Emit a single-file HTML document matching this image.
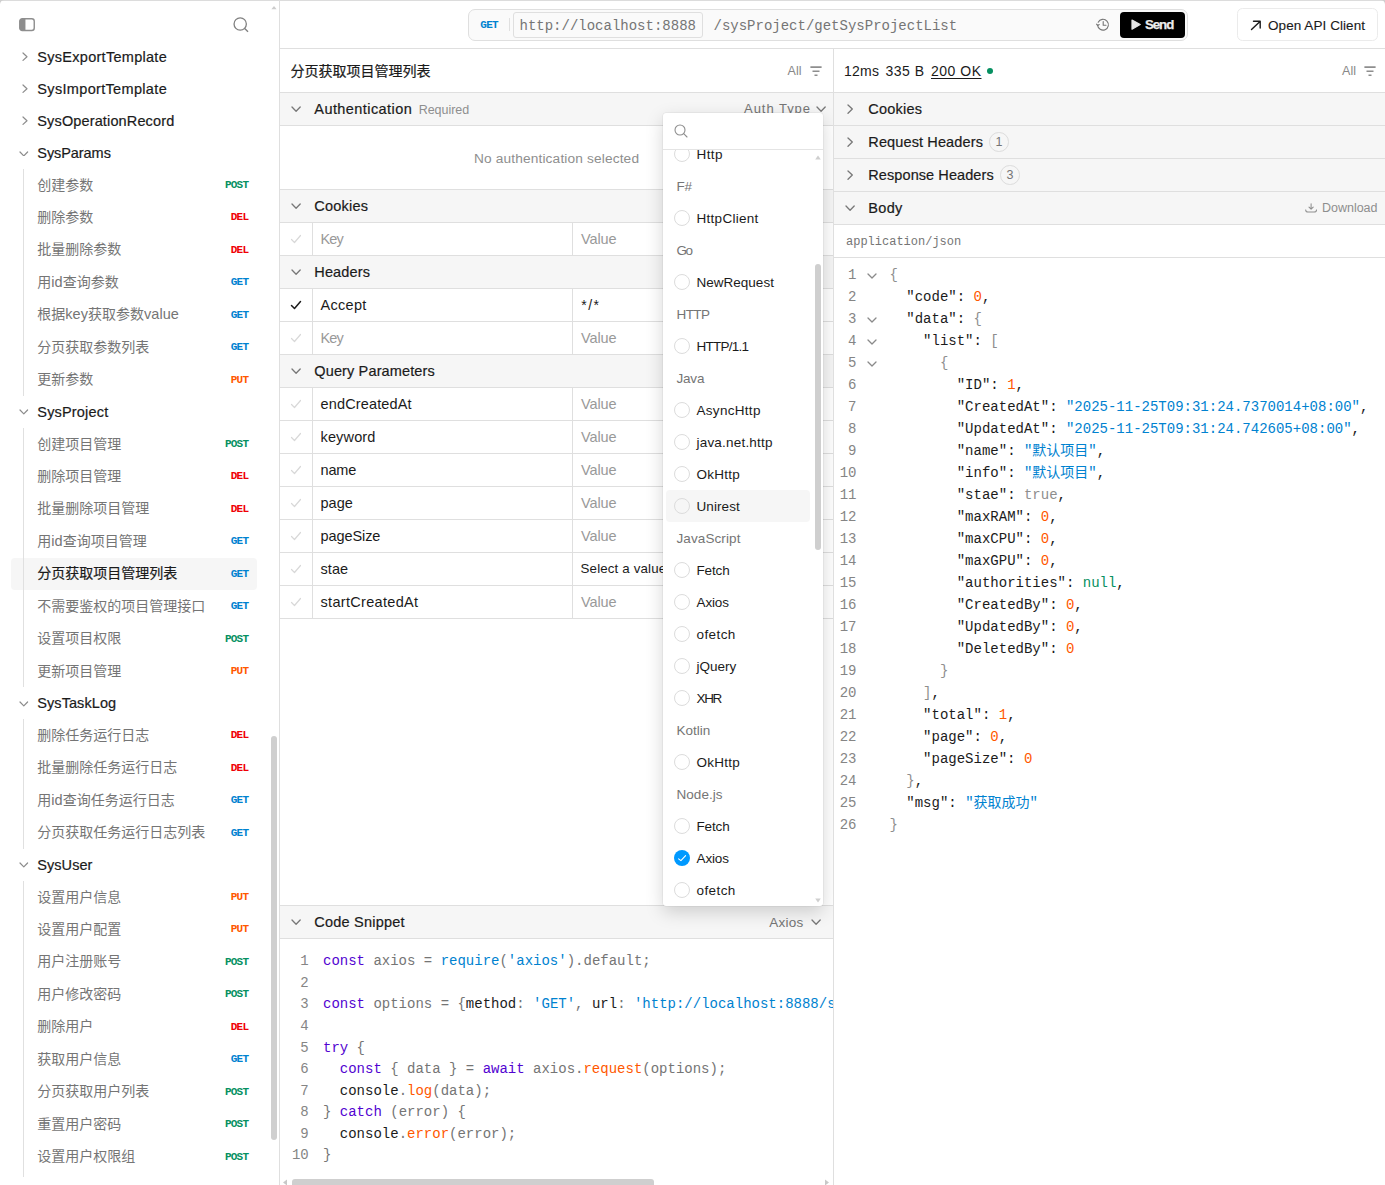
<!DOCTYPE html>
<html lang="zh-CN"><head><meta charset="utf-8"><title>API Reference</title>
<style>
html,body{margin:0;padding:0;background:#fff;}
body{width:1385px;height:1185px;position:relative;overflow:hidden;-webkit-font-smoothing:antialiased;}
.b{position:absolute;box-sizing:border-box;}
.t{position:absolute;white-space:pre;line-height:20px;}
.s{font-family:"Liberation Sans","Noto Sans CJK SC",sans-serif;}
.m{font-family:"Liberation Mono","Noto Sans CJK SC",monospace;}
</style></head><body>
<div class="b" style="left:0px;top:0px;width:1385px;height:1px;background:#dcdcdc"></div>
<svg class="b" style="left:0px;top:0px;" width="5" height="5" viewBox="0 0 5 5"><path d="M0 0 H4.5 A4.5 4.5 0 0 0 0 4.5Z" fill="#cfcfcf"/></svg>
<svg class="b" style="left:1380px;top:0px;" width="5" height="5" viewBox="0 0 5 5"><path d="M5 0 H0.5 A4.5 4.5 0 0 1 5 4.5Z" fill="#cfcfcf"/></svg>
<div class="b" style="left:279px;top:0px;width:1px;height:1185px;background:#dfdfdf"></div>
<div class="b" style="left:280px;top:48px;width:1105px;height:1px;background:#dfdfdf"></div>
<div class="b" style="left:833px;top:49px;width:1px;height:1136px;background:#dfdfdf"></div>
<svg class="b" style="left:19px;top:18.2px;" width="17" height="14" viewBox="0 0 17 14"><rect x="0.75" y="0.75" width="14.5" height="11.7" rx="2.5" fill="none" stroke="#8e8e8e" stroke-width="1.4"/><path d="M0.75 3.25 a2.5 2.5 0 0 1 2.5 -2.5 h3.2 v11.7 h-3.2 a2.5 2.5 0 0 1 -2.5 -2.5z" fill="#8e8e8e"/></svg>
<svg class="b" style="left:232px;top:16px;" width="18" height="18" viewBox="0 0 18 18"><circle cx="8.2" cy="8" r="6.15" fill="none" stroke="#808080" stroke-width="1.3"/><path d="M12.7 12.6 L16 15.8" stroke="#808080" stroke-width="1.4"/></svg>
<svg class="b" style="left:21.6px;top:52.2px;" width="6" height="9.4" viewBox="0 0 6 9.4"><path d="M1 1 L5 4.7 L1 8.4" fill="none" stroke="#8c8c8c" stroke-width="1.2" stroke-linecap="round" stroke-linejoin="round"/></svg>
<span class="t s" style="top:46.7px;font-size:14.5px;color:#1b1b1b;-webkit-text-stroke:0.2px #1b1b1b;left:37.3px;letter-spacing:0.280px;">SysExportTemplate</span>
<svg class="b" style="left:21.6px;top:84.2px;" width="6" height="9.4" viewBox="0 0 6 9.4"><path d="M1 1 L5 4.7 L1 8.4" fill="none" stroke="#8c8c8c" stroke-width="1.2" stroke-linecap="round" stroke-linejoin="round"/></svg>
<span class="t s" style="top:78.7px;font-size:14.5px;color:#1b1b1b;-webkit-text-stroke:0.2px #1b1b1b;left:37.3px;letter-spacing:0.331px;">SysImportTemplate</span>
<svg class="b" style="left:21.6px;top:116.2px;" width="6" height="9.4" viewBox="0 0 6 9.4"><path d="M1 1 L5 4.7 L1 8.4" fill="none" stroke="#8c8c8c" stroke-width="1.2" stroke-linecap="round" stroke-linejoin="round"/></svg>
<span class="t s" style="top:110.7px;font-size:14.5px;color:#1b1b1b;-webkit-text-stroke:0.2px #1b1b1b;left:37.3px;letter-spacing:0.136px;">SysOperationRecord</span>
<svg class="b" style="left:19.2px;top:150.55px;" width="9.6" height="5.9" viewBox="0 0 9.6 5.9"><path d="M1 1 L4.8 4.9 L8.6 1" fill="none" stroke="#8c8c8c" stroke-width="1.2" stroke-linecap="round" stroke-linejoin="round"/></svg>
<span class="t s" style="top:142.8px;font-size:14.5px;color:#1b1b1b;-webkit-text-stroke:0.2px #1b1b1b;left:37.3px;letter-spacing:-0.068px;">SysParams</span>
<span class="t s" style="top:174.5px;font-size:14px;color:#757575;left:37.3px;">创建参数</span>
<span class="t m" style="top:175.1px;font-size:11px;color:#069061;font-weight:bold;right:1136.7px;letter-spacing:-0.75px;">POST</span>
<span class="t s" style="top:206.5px;font-size:14px;color:#757575;left:37.3px;">删除参数</span>
<span class="t m" style="top:207.1px;font-size:11px;color:#ef0006;font-weight:bold;right:1136.7px;letter-spacing:-0.75px;">DEL</span>
<span class="t s" style="top:239px;font-size:14px;color:#757575;left:37.3px;">批量删除参数</span>
<span class="t m" style="top:239.6px;font-size:11px;color:#ef0006;font-weight:bold;right:1136.7px;letter-spacing:-0.75px;">DEL</span>
<span class="t s" style="top:271.5px;font-size:14px;color:#757575;left:37.3px;">用<span style="font-size:14.5px;letter-spacing:0.05px">id</span>查询参数</span>
<span class="t m" style="top:272.1px;font-size:11px;color:#0082d0;font-weight:bold;right:1136.7px;letter-spacing:-0.75px;">GET</span>
<span class="t s" style="top:304px;font-size:14px;color:#757575;left:37.3px;">根据<span style="font-size:14.5px;letter-spacing:0.05px">key</span>获取参数<span style="font-size:14.5px;letter-spacing:0.05px">value</span></span>
<span class="t m" style="top:304.6px;font-size:11px;color:#0082d0;font-weight:bold;right:1136.7px;letter-spacing:-0.75px;">GET</span>
<span class="t s" style="top:336.5px;font-size:14px;color:#757575;left:37.3px;">分页获取参数列表</span>
<span class="t m" style="top:337.1px;font-size:11px;color:#0082d0;font-weight:bold;right:1136.7px;letter-spacing:-0.75px;">GET</span>
<span class="t s" style="top:369px;font-size:14px;color:#757575;left:37.3px;">更新参数</span>
<span class="t m" style="top:369.6px;font-size:11px;color:#ff5800;font-weight:bold;right:1136.7px;letter-spacing:-0.75px;">PUT</span>
<svg class="b" style="left:19.2px;top:409.25px;" width="9.6" height="5.9" viewBox="0 0 9.6 5.9"><path d="M1 1 L4.8 4.9 L8.6 1" fill="none" stroke="#8c8c8c" stroke-width="1.2" stroke-linecap="round" stroke-linejoin="round"/></svg>
<span class="t s" style="top:401.5px;font-size:14.5px;color:#1b1b1b;-webkit-text-stroke:0.2px #1b1b1b;left:37.3px;letter-spacing:0.176px;">SysProject</span>
<span class="t s" style="top:433.5px;font-size:14px;color:#757575;left:37.3px;">创建项目管理</span>
<span class="t m" style="top:434.1px;font-size:11px;color:#069061;font-weight:bold;right:1136.7px;letter-spacing:-0.75px;">POST</span>
<span class="t s" style="top:465.5px;font-size:14px;color:#757575;left:37.3px;">删除项目管理</span>
<span class="t m" style="top:466.1px;font-size:11px;color:#ef0006;font-weight:bold;right:1136.7px;letter-spacing:-0.75px;">DEL</span>
<span class="t s" style="top:498px;font-size:14px;color:#757575;left:37.3px;">批量删除项目管理</span>
<span class="t m" style="top:498.6px;font-size:11px;color:#ef0006;font-weight:bold;right:1136.7px;letter-spacing:-0.75px;">DEL</span>
<span class="t s" style="top:530.5px;font-size:14px;color:#757575;left:37.3px;">用<span style="font-size:14.5px;letter-spacing:0.05px">id</span>查询项目管理</span>
<span class="t m" style="top:531.1px;font-size:11px;color:#0082d0;font-weight:bold;right:1136.7px;letter-spacing:-0.75px;">GET</span>
<div class="b" style="left:11px;top:558px;width:246px;height:31.5px;background:#f6f6f6;border-radius:4px"></div>
<span class="t s" style="top:563px;font-size:14px;color:#1b1b1b;-webkit-text-stroke:0.2px #1b1b1b;left:37.3px;">分页获取项目管理列表</span>
<span class="t m" style="top:563.6px;font-size:11px;color:#0082d0;font-weight:bold;right:1136.7px;letter-spacing:-0.75px;">GET</span>
<span class="t s" style="top:595.5px;font-size:14px;color:#757575;left:37.3px;">不需要鉴权的项目管理接口</span>
<span class="t m" style="top:596.1px;font-size:11px;color:#0082d0;font-weight:bold;right:1136.7px;letter-spacing:-0.75px;">GET</span>
<span class="t s" style="top:628px;font-size:14px;color:#757575;left:37.3px;">设置项目权限</span>
<span class="t m" style="top:628.6px;font-size:11px;color:#069061;font-weight:bold;right:1136.7px;letter-spacing:-0.75px;">POST</span>
<span class="t s" style="top:660.5px;font-size:14px;color:#757575;left:37.3px;">更新项目管理</span>
<span class="t m" style="top:661.1px;font-size:11px;color:#ff5800;font-weight:bold;right:1136.7px;letter-spacing:-0.75px;">PUT</span>
<svg class="b" style="left:19.2px;top:700.75px;" width="9.6" height="5.9" viewBox="0 0 9.6 5.9"><path d="M1 1 L4.8 4.9 L8.6 1" fill="none" stroke="#8c8c8c" stroke-width="1.2" stroke-linecap="round" stroke-linejoin="round"/></svg>
<span class="t s" style="top:693px;font-size:14.5px;color:#1b1b1b;-webkit-text-stroke:0.2px #1b1b1b;left:37.3px;letter-spacing:0.068px;">SysTaskLog</span>
<span class="t s" style="top:724.5px;font-size:14px;color:#757575;left:37.3px;">删除任务运行日志</span>
<span class="t m" style="top:725.1px;font-size:11px;color:#ef0006;font-weight:bold;right:1136.7px;letter-spacing:-0.75px;">DEL</span>
<span class="t s" style="top:757px;font-size:14px;color:#757575;left:37.3px;">批量删除任务运行日志</span>
<span class="t m" style="top:757.6px;font-size:11px;color:#ef0006;font-weight:bold;right:1136.7px;letter-spacing:-0.75px;">DEL</span>
<span class="t s" style="top:789.5px;font-size:14px;color:#757575;left:37.3px;">用<span style="font-size:14.5px;letter-spacing:0.05px">id</span>查询任务运行日志</span>
<span class="t m" style="top:790.1px;font-size:11px;color:#0082d0;font-weight:bold;right:1136.7px;letter-spacing:-0.75px;">GET</span>
<span class="t s" style="top:822px;font-size:14px;color:#757575;left:37.3px;">分页获取任务运行日志列表</span>
<span class="t m" style="top:822.6px;font-size:11px;color:#0082d0;font-weight:bold;right:1136.7px;letter-spacing:-0.75px;">GET</span>
<svg class="b" style="left:19.2px;top:862.25px;" width="9.6" height="5.9" viewBox="0 0 9.6 5.9"><path d="M1 1 L4.8 4.9 L8.6 1" fill="none" stroke="#8c8c8c" stroke-width="1.2" stroke-linecap="round" stroke-linejoin="round"/></svg>
<span class="t s" style="top:854.5px;font-size:14.5px;color:#1b1b1b;-webkit-text-stroke:0.2px #1b1b1b;left:37.3px;letter-spacing:0.051px;">SysUser</span>
<span class="t s" style="top:886.5px;font-size:14px;color:#757575;left:37.3px;">设置用户信息</span>
<span class="t m" style="top:887.1px;font-size:11px;color:#ff5800;font-weight:bold;right:1136.7px;letter-spacing:-0.75px;">PUT</span>
<span class="t s" style="top:918.5px;font-size:14px;color:#757575;left:37.3px;">设置用户配置</span>
<span class="t m" style="top:919.1px;font-size:11px;color:#ff5800;font-weight:bold;right:1136.7px;letter-spacing:-0.75px;">PUT</span>
<span class="t s" style="top:951px;font-size:14px;color:#757575;left:37.3px;">用户注册账号</span>
<span class="t m" style="top:951.6px;font-size:11px;color:#069061;font-weight:bold;right:1136.7px;letter-spacing:-0.75px;">POST</span>
<span class="t s" style="top:983.5px;font-size:14px;color:#757575;left:37.3px;">用户修改密码</span>
<span class="t m" style="top:984.1px;font-size:11px;color:#069061;font-weight:bold;right:1136.7px;letter-spacing:-0.75px;">POST</span>
<span class="t s" style="top:1016px;font-size:14px;color:#757575;left:37.3px;">删除用户</span>
<span class="t m" style="top:1016.6px;font-size:11px;color:#ef0006;font-weight:bold;right:1136.7px;letter-spacing:-0.75px;">DEL</span>
<span class="t s" style="top:1048.5px;font-size:14px;color:#757575;left:37.3px;">获取用户信息</span>
<span class="t m" style="top:1049.1px;font-size:11px;color:#0082d0;font-weight:bold;right:1136.7px;letter-spacing:-0.75px;">GET</span>
<span class="t s" style="top:1081px;font-size:14px;color:#757575;left:37.3px;">分页获取用户列表</span>
<span class="t m" style="top:1081.6px;font-size:11px;color:#069061;font-weight:bold;right:1136.7px;letter-spacing:-0.75px;">POST</span>
<span class="t s" style="top:1113.5px;font-size:14px;color:#757575;left:37.3px;">重置用户密码</span>
<span class="t m" style="top:1114.1px;font-size:11px;color:#069061;font-weight:bold;right:1136.7px;letter-spacing:-0.75px;">POST</span>
<span class="t s" style="top:1146px;font-size:14px;color:#757575;left:37.3px;">设置用户权限组</span>
<span class="t m" style="top:1146.6px;font-size:11px;color:#069061;font-weight:bold;right:1136.7px;letter-spacing:-0.75px;">POST</span>
<div class="b" style="left:23px;top:168.5px;width:1px;height:227.5px;background:#e0e0e0"></div>
<div class="b" style="left:23px;top:427.5px;width:1px;height:259.5px;background:#e0e0e0"></div>
<div class="b" style="left:23px;top:719px;width:1px;height:129.5px;background:#e0e0e0"></div>
<div class="b" style="left:23px;top:880.5px;width:1px;height:296.5px;background:#e0e0e0"></div>
<div class="b" style="left:271px;top:736px;width:6px;height:404px;background:#cfcfcf;border-radius:3px"></div>
<svg class="b" style="left:270px;top:5px;" width="8" height="6" viewBox="0 0 8 6"><path d="M4 0.9 L6.6 4.3 L1.4 4.3z" fill="#cdcdcd"/></svg>
<div class="b" style="left:468px;top:9px;width:720px;height:32px;border:1px solid #dfdfdf;border-radius:7px;background:#fafafa;"></div>
<span class="t m" style="top:14.6px;font-size:11px;color:#0082d0;font-weight:bold;left:480.3px;letter-spacing:-0.7px;">GET</span>
<div class="b" style="left:509px;top:18px;width:1px;height:12.5px;background:#e0e0e0"></div>
<div class="b" style="left:513px;top:12px;width:189.5px;height:26px;border:1px solid #dfdfdf;border-radius:3px;"></div>
<span class="t m" style="top:16.3px;font-size:14px;color:#757575;left:519.5px;">http://localhost:8888</span>
<span class="t m" style="top:16.3px;font-size:14px;color:#757575;left:713.5px;">/sysProject/getSysProjectList</span>
<svg class="b" style="left:1096px;top:18.3px;" width="14" height="14" viewBox="0 0 14 14"><path d="M2.2 4.2 A5.4 5.4 0 1 1 1.6 7" fill="none" stroke="#757575" stroke-width="1.1" stroke-linecap="round"/><path d="M0.6 6.2 L1.7 7.6 L3.2 6.5" fill="none" stroke="#757575" stroke-width="1.1" stroke-linecap="round" stroke-linejoin="round"/><path d="M7.2 3.6 V7.2 H10" fill="none" stroke="#757575" stroke-width="1.1" stroke-linecap="round" stroke-linejoin="round"/></svg>
<div class="b" style="left:1120px;top:12px;width:65px;height:26px;background:#000;border-radius:4px;"></div>
<svg class="b" style="left:1130.5px;top:19px;" width="11" height="12" viewBox="0 0 11 12"><path d="M1 1 L9.2 5.6 L1 10.2z" fill="#e6e6e6" stroke="#e6e6e6" stroke-width="1.2" stroke-linejoin="round"/></svg>
<span class="t s" style="top:15.2px;font-size:13.3px;color:#ececec;font-weight:bold;-webkit-text-stroke:0.25px #ececec;left:1145px;letter-spacing:-1.072px;">Send</span>
<div class="b" style="left:1237px;top:8px;width:141px;height:33px;border:1px solid #ebebeb;border-radius:5.5px;"></div>
<svg class="b" style="left:1250px;top:19.5px;" width="12" height="11" viewBox="0 0 12 11"><path d="M1.5 9.5 L10 1.5 M3.5 1.3 H10.2 V8" fill="none" stroke="#1b1b1b" stroke-width="1.4" stroke-linecap="round" stroke-linejoin="round"/></svg>
<span class="t s" style="top:16px;font-size:13.5px;color:#1b1b1b;-webkit-text-stroke:0.12px #1b1b1b;left:1268px;letter-spacing:0.067px;">Open API Client</span>
<span class="t s" style="top:60.5px;font-size:14px;color:#1b1b1b;-webkit-text-stroke:0.22px #1b1b1b;left:290.5px;">分页获取项目管理列表</span>
<span class="t s" style="top:60.8px;font-size:12.5px;color:#888;right:583.5px;">All</span>
<svg class="b" style="left:809.5px;top:65.8px;" width="13" height="11" viewBox="0 0 13 11"><path d="M0.4 1.1 H11.6 M2.5 5.2 H9.5 M4.5 9.3 H7.5" stroke="#8e8e8e" stroke-width="1.55"/></svg>
<span class="t s" style="top:60.8px;font-size:12.5px;color:#888;right:29px;">All</span>
<svg class="b" style="left:1364px;top:65.8px;" width="13" height="11" viewBox="0 0 13 11"><path d="M0.4 1.1 H11.6 M2.5 5.2 H9.5 M4.5 9.3 H7.5" stroke="#8e8e8e" stroke-width="1.55"/></svg>
<div class="b" style="left:280px;top:92px;width:553px;height:1px;background:#dfdfdf"></div>
<div class="b" style="left:280px;top:93px;width:553px;height:32px;background:#f6f6f6"></div>
<div class="b" style="left:280px;top:125px;width:553px;height:1px;background:#dfdfdf"></div>
<svg class="b" style="left:291.2px;top:106.35px;" width="10.2" height="6.3" viewBox="0 0 10.2 6.3"><path d="M1 1 L5.1 5.3 L9.2 1" fill="none" stroke="#787878" stroke-width="1.3" stroke-linecap="round" stroke-linejoin="round"/></svg>
<span class="t s" style="top:98.7px;font-size:14.5px;color:#1b1b1b;-webkit-text-stroke:0.2px #1b1b1b;left:314.3px;letter-spacing:0.430px;">Authentication</span>
<span class="t s" style="top:99.5px;font-size:12.5px;color:#8e8e8e;left:418.7px;letter-spacing:-0.033px;">Required</span>
<span class="t s" style="top:99px;font-size:13px;color:#757575;right:574px;letter-spacing:0.961px;">Auth Type</span>
<svg class="b" style="left:815.9px;top:106.35px;" width="10.2" height="6.3" viewBox="0 0 10.2 6.3"><path d="M1 1 L5.1 5.3 L9.2 1" fill="none" stroke="#787878" stroke-width="1.3" stroke-linecap="round" stroke-linejoin="round"/></svg>
<span class="t s" style="top:148.5px;font-size:13.7px;color:#8e8e8e;left:474px;letter-spacing:0.147px;">No authentication selected</span>
<div class="b" style="left:280px;top:189px;width:553px;height:1px;background:#dfdfdf"></div>
<div class="b" style="left:280px;top:190px;width:553px;height:32px;background:#f6f6f6"></div>
<div class="b" style="left:280px;top:222px;width:553px;height:1px;background:#dfdfdf"></div>
<svg class="b" style="left:291.2px;top:203.35px;" width="10.2" height="6.3" viewBox="0 0 10.2 6.3"><path d="M1 1 L5.1 5.3 L9.2 1" fill="none" stroke="#787878" stroke-width="1.3" stroke-linecap="round" stroke-linejoin="round"/></svg>
<span class="t s" style="top:195.7px;font-size:14.5px;color:#1b1b1b;-webkit-text-stroke:0.2px #1b1b1b;left:314.3px;letter-spacing:0.202px;">Cookies</span>
<div class="b" style="left:280px;top:255px;width:553px;height:1px;background:#dfdfdf"></div>
<div class="b" style="left:280px;top:256px;width:553px;height:32px;background:#f6f6f6"></div>
<div class="b" style="left:280px;top:288px;width:553px;height:1px;background:#dfdfdf"></div>
<svg class="b" style="left:291.2px;top:269.35px;" width="10.2" height="6.3" viewBox="0 0 10.2 6.3"><path d="M1 1 L5.1 5.3 L9.2 1" fill="none" stroke="#787878" stroke-width="1.3" stroke-linecap="round" stroke-linejoin="round"/></svg>
<span class="t s" style="top:261.7px;font-size:14.5px;color:#1b1b1b;-webkit-text-stroke:0.2px #1b1b1b;left:314.3px;letter-spacing:0.131px;">Headers</span>
<div class="b" style="left:280px;top:354px;width:553px;height:1px;background:#dfdfdf"></div>
<div class="b" style="left:280px;top:355px;width:553px;height:32px;background:#f6f6f6"></div>
<div class="b" style="left:280px;top:387px;width:553px;height:1px;background:#dfdfdf"></div>
<svg class="b" style="left:291.2px;top:368.35px;" width="10.2" height="6.3" viewBox="0 0 10.2 6.3"><path d="M1 1 L5.1 5.3 L9.2 1" fill="none" stroke="#787878" stroke-width="1.3" stroke-linecap="round" stroke-linejoin="round"/></svg>
<span class="t s" style="top:360.7px;font-size:14.5px;color:#1b1b1b;-webkit-text-stroke:0.2px #1b1b1b;left:314.3px;letter-spacing:0.135px;">Query Parameters</span>
<div class="b" style="left:280px;top:255px;width:553px;height:1px;background:#dfdfdf"></div>
<div class="b" style="left:312px;top:223px;width:1px;height:32px;background:#dfdfdf"></div>
<div class="b" style="left:572px;top:223px;width:1px;height:32px;background:#dfdfdf"></div>
<svg class="b" style="left:290.2px;top:234.2px;" width="12" height="10" viewBox="0 0 12 10"><path d="M1.5 5.5 L4.5 8.5 L10.5 1.5" fill="none" stroke="#d8d8d8" stroke-width="1.2" stroke-linecap="round" stroke-linejoin="round"/></svg>
<span class="t s" style="top:229.2px;font-size:14.5px;color:#999999;left:320.5px;letter-spacing:-0.850px;">Key</span>
<span class="t s" style="top:229.2px;font-size:14.5px;color:#999999;left:581px;letter-spacing:-0.104px;">Value</span>
<div class="b" style="left:280px;top:321px;width:553px;height:1px;background:#dfdfdf"></div>
<div class="b" style="left:312px;top:289px;width:1px;height:32px;background:#dfdfdf"></div>
<div class="b" style="left:572px;top:289px;width:1px;height:32px;background:#dfdfdf"></div>
<svg class="b" style="left:290.2px;top:300.2px;" width="12" height="10" viewBox="0 0 12 10"><path d="M1.5 5.5 L4.5 8.5 L10.5 1.5" fill="none" stroke="#1b1b1b" stroke-width="1.5" stroke-linecap="round" stroke-linejoin="round"/></svg>
<span class="t s" style="top:295.2px;font-size:14.5px;color:#1b1b1b;left:320.5px;letter-spacing:0.311px;">Accept</span>
<span class="t s" style="top:295.4px;font-size:14px;color:#1b1b1b;left:581.3px;letter-spacing:1.402px;">*/*</span>
<div class="b" style="left:280px;top:354px;width:553px;height:1px;background:#dfdfdf"></div>
<div class="b" style="left:312px;top:322px;width:1px;height:32px;background:#dfdfdf"></div>
<div class="b" style="left:572px;top:322px;width:1px;height:32px;background:#dfdfdf"></div>
<svg class="b" style="left:290.2px;top:333.2px;" width="12" height="10" viewBox="0 0 12 10"><path d="M1.5 5.5 L4.5 8.5 L10.5 1.5" fill="none" stroke="#d8d8d8" stroke-width="1.2" stroke-linecap="round" stroke-linejoin="round"/></svg>
<span class="t s" style="top:328.2px;font-size:14.5px;color:#999999;left:320.5px;letter-spacing:-0.850px;">Key</span>
<span class="t s" style="top:328.2px;font-size:14.5px;color:#999999;left:581px;letter-spacing:-0.104px;">Value</span>
<div class="b" style="left:280px;top:420px;width:553px;height:1px;background:#dfdfdf"></div>
<div class="b" style="left:312px;top:388px;width:1px;height:32px;background:#dfdfdf"></div>
<div class="b" style="left:572px;top:388px;width:1px;height:32px;background:#dfdfdf"></div>
<svg class="b" style="left:290.2px;top:399.2px;" width="12" height="10" viewBox="0 0 12 10"><path d="M1.5 5.5 L4.5 8.5 L10.5 1.5" fill="none" stroke="#d8d8d8" stroke-width="1.2" stroke-linecap="round" stroke-linejoin="round"/></svg>
<span class="t s" style="top:394.2px;font-size:14.5px;color:#1b1b1b;left:320.5px;letter-spacing:0.147px;">endCreatedAt</span>
<span class="t s" style="top:394.2px;font-size:14.5px;color:#999999;left:581px;letter-spacing:-0.104px;">Value</span>
<div class="b" style="left:280px;top:453px;width:553px;height:1px;background:#dfdfdf"></div>
<div class="b" style="left:312px;top:421px;width:1px;height:32px;background:#dfdfdf"></div>
<div class="b" style="left:572px;top:421px;width:1px;height:32px;background:#dfdfdf"></div>
<svg class="b" style="left:290.2px;top:432.2px;" width="12" height="10" viewBox="0 0 12 10"><path d="M1.5 5.5 L4.5 8.5 L10.5 1.5" fill="none" stroke="#d8d8d8" stroke-width="1.2" stroke-linecap="round" stroke-linejoin="round"/></svg>
<span class="t s" style="top:427.2px;font-size:14.5px;color:#1b1b1b;left:320.5px;letter-spacing:0.150px;">keyword</span>
<span class="t s" style="top:427.2px;font-size:14.5px;color:#999999;left:581px;letter-spacing:-0.104px;">Value</span>
<div class="b" style="left:280px;top:486px;width:553px;height:1px;background:#dfdfdf"></div>
<div class="b" style="left:312px;top:454px;width:1px;height:32px;background:#dfdfdf"></div>
<div class="b" style="left:572px;top:454px;width:1px;height:32px;background:#dfdfdf"></div>
<svg class="b" style="left:290.2px;top:465.2px;" width="12" height="10" viewBox="0 0 12 10"><path d="M1.5 5.5 L4.5 8.5 L10.5 1.5" fill="none" stroke="#d8d8d8" stroke-width="1.2" stroke-linecap="round" stroke-linejoin="round"/></svg>
<span class="t s" style="top:460.2px;font-size:14.5px;color:#1b1b1b;left:320.5px;letter-spacing:-0.160px;">name</span>
<span class="t s" style="top:460.2px;font-size:14.5px;color:#999999;left:581px;letter-spacing:-0.104px;">Value</span>
<div class="b" style="left:280px;top:519px;width:553px;height:1px;background:#dfdfdf"></div>
<div class="b" style="left:312px;top:487px;width:1px;height:32px;background:#dfdfdf"></div>
<div class="b" style="left:572px;top:487px;width:1px;height:32px;background:#dfdfdf"></div>
<svg class="b" style="left:290.2px;top:498.2px;" width="12" height="10" viewBox="0 0 12 10"><path d="M1.5 5.5 L4.5 8.5 L10.5 1.5" fill="none" stroke="#d8d8d8" stroke-width="1.2" stroke-linecap="round" stroke-linejoin="round"/></svg>
<span class="t s" style="top:493.2px;font-size:14.5px;color:#1b1b1b;left:320.5px;letter-spacing:0.045px;">page</span>
<span class="t s" style="top:493.2px;font-size:14.5px;color:#999999;left:581px;letter-spacing:-0.104px;">Value</span>
<div class="b" style="left:280px;top:552px;width:553px;height:1px;background:#dfdfdf"></div>
<div class="b" style="left:312px;top:520px;width:1px;height:32px;background:#dfdfdf"></div>
<div class="b" style="left:572px;top:520px;width:1px;height:32px;background:#dfdfdf"></div>
<svg class="b" style="left:290.2px;top:531.2px;" width="12" height="10" viewBox="0 0 12 10"><path d="M1.5 5.5 L4.5 8.5 L10.5 1.5" fill="none" stroke="#d8d8d8" stroke-width="1.2" stroke-linecap="round" stroke-linejoin="round"/></svg>
<span class="t s" style="top:526.2px;font-size:14.5px;color:#1b1b1b;left:320.5px;letter-spacing:-0.081px;">pageSize</span>
<span class="t s" style="top:526.2px;font-size:14.5px;color:#999999;left:581px;letter-spacing:-0.104px;">Value</span>
<div class="b" style="left:280px;top:585px;width:553px;height:1px;background:#dfdfdf"></div>
<div class="b" style="left:312px;top:553px;width:1px;height:32px;background:#dfdfdf"></div>
<div class="b" style="left:572px;top:553px;width:1px;height:32px;background:#dfdfdf"></div>
<svg class="b" style="left:290.2px;top:564.2px;" width="12" height="10" viewBox="0 0 12 10"><path d="M1.5 5.5 L4.5 8.5 L10.5 1.5" fill="none" stroke="#d8d8d8" stroke-width="1.2" stroke-linecap="round" stroke-linejoin="round"/></svg>
<span class="t s" style="top:559.2px;font-size:14.5px;color:#1b1b1b;left:320.5px;letter-spacing:0.093px;">stae</span>
<span class="t s" style="top:559.4px;font-size:13.3px;color:#1b1b1b;left:580.6px;letter-spacing:0.151px;">Select a value</span>
<div class="b" style="left:280px;top:618px;width:553px;height:1px;background:#dfdfdf"></div>
<div class="b" style="left:312px;top:586px;width:1px;height:32px;background:#dfdfdf"></div>
<div class="b" style="left:572px;top:586px;width:1px;height:32px;background:#dfdfdf"></div>
<svg class="b" style="left:290.2px;top:597.2px;" width="12" height="10" viewBox="0 0 12 10"><path d="M1.5 5.5 L4.5 8.5 L10.5 1.5" fill="none" stroke="#d8d8d8" stroke-width="1.2" stroke-linecap="round" stroke-linejoin="round"/></svg>
<span class="t s" style="top:592.2px;font-size:14.5px;color:#1b1b1b;left:320.5px;letter-spacing:0.315px;">startCreatedAt</span>
<span class="t s" style="top:592.2px;font-size:14.5px;color:#999999;left:581px;letter-spacing:-0.104px;">Value</span>
<div class="b" style="left:280px;top:905px;width:553px;height:1px;background:#dfdfdf"></div>
<div class="b" style="left:280px;top:906px;width:553px;height:32px;background:#f6f6f6"></div>
<div class="b" style="left:280px;top:938px;width:553px;height:1px;background:#dfdfdf"></div>
<svg class="b" style="left:291.2px;top:919.35px;" width="10.2" height="6.3" viewBox="0 0 10.2 6.3"><path d="M1 1 L5.1 5.3 L9.2 1" fill="none" stroke="#787878" stroke-width="1.3" stroke-linecap="round" stroke-linejoin="round"/></svg>
<span class="t s" style="top:911.7px;font-size:14.5px;color:#1b1b1b;-webkit-text-stroke:0.2px #1b1b1b;left:314.3px;letter-spacing:0.211px;">Code Snippet</span>
<span class="t s" style="top:912.8px;font-size:13.5px;color:#757575;right:581.5px;letter-spacing:0.246px;">Axios</span>
<svg class="b" style="left:811.4px;top:919.35px;" width="10.2" height="6.3" viewBox="0 0 10.2 6.3"><path d="M1 1 L5.1 5.3 L9.2 1" fill="none" stroke="#787878" stroke-width="1.3" stroke-linecap="round" stroke-linejoin="round"/></svg>
<span class="t m" style="top:951.3px;font-size:14px;color:#858585;right:1076.3px;">1</span>
<span class="t m" style="top:972.86px;font-size:14px;color:#858585;right:1076.3px;">2</span>
<span class="t m" style="top:994.42px;font-size:14px;color:#858585;right:1076.3px;">3</span>
<span class="t m" style="top:1015.98px;font-size:14px;color:#858585;right:1076.3px;">4</span>
<span class="t m" style="top:1037.54px;font-size:14px;color:#858585;right:1076.3px;">5</span>
<span class="t m" style="top:1059.1px;font-size:14px;color:#858585;right:1076.3px;">6</span>
<span class="t m" style="top:1080.66px;font-size:14px;color:#858585;right:1076.3px;">7</span>
<span class="t m" style="top:1102.22px;font-size:14px;color:#858585;right:1076.3px;">8</span>
<span class="t m" style="top:1123.78px;font-size:14px;color:#858585;right:1076.3px;">9</span>
<span class="t m" style="top:1145.34px;font-size:14px;color:#858585;right:1076.3px;">10</span>
<div class="b" style="left:280px;top:939px;width:553px;height:239px;overflow:hidden;"><span class="t m" style="left:43px;top:12.3px;font-size:14px"><span style="color:#5203d1">const</span><span style="color:#757575"> axios = </span><span style="color:#0082d0">require</span><span style="color:#757575">(</span><span style="color:#0082d0">&#x27;axios&#x27;</span><span style="color:#757575">).default;</span></span><span class="t m" style="left:43px;top:33.86px;font-size:14px"></span><span class="t m" style="left:43px;top:55.42px;font-size:14px"><span style="color:#5203d1">const</span><span style="color:#757575"> options = {</span><span style="color:#1b1b1b">method</span><span style="color:#757575">: </span><span style="color:#0082d0">&#x27;GET&#x27;</span><span style="color:#757575">, </span><span style="color:#1b1b1b">url</span><span style="color:#757575">: </span><span style="color:#0082d0">&#x27;http://localhost:8888/sysProject/getSysProjectList&#x27;</span><span style="color:#757575">};</span></span><span class="t m" style="left:43px;top:76.98px;font-size:14px"></span><span class="t m" style="left:43px;top:98.54px;font-size:14px"><span style="color:#5203d1">try</span><span style="color:#757575"> {</span></span><span class="t m" style="left:43px;top:120.1px;font-size:14px"><span style="color:#5203d1">  const</span><span style="color:#757575"> { data } = </span><span style="color:#5203d1">await</span><span style="color:#757575"> axios.</span><span style="color:#ff5800">request</span><span style="color:#757575">(options);</span></span><span class="t m" style="left:43px;top:141.66px;font-size:14px"><span style="color:#1b1b1b">  console</span><span style="color:#757575">.</span><span style="color:#ff5800">log</span><span style="color:#757575">(data);</span></span><span class="t m" style="left:43px;top:163.22px;font-size:14px"><span style="color:#757575">} </span><span style="color:#5203d1">catch</span><span style="color:#757575"> (error) {</span></span><span class="t m" style="left:43px;top:184.78px;font-size:14px"><span style="color:#1b1b1b">  console</span><span style="color:#757575">.</span><span style="color:#ff5800">error</span><span style="color:#757575">(error);</span></span><span class="t m" style="left:43px;top:206.34px;font-size:14px"><span style="color:#757575">}</span></span></div>
<div class="b" style="left:292px;top:1179px;width:362px;height:9px;background:#cfcfcf;border-radius:3px"></div>
<svg class="b" style="left:282px;top:1179px;" width="6" height="7" viewBox="0 0 6 7"><path d="M5 0.5 L1 3.5 L5 6.5z" fill="#c8c8c8"/></svg>
<svg class="b" style="left:824px;top:1179px;" width="6" height="7" viewBox="0 0 6 7"><path d="M1 0.5 L5 3.5 L1 6.5z" fill="#c8c8c8"/></svg>
<span class="t s" style="top:61px;font-size:14px;color:#1b1b1b;left:844px;letter-spacing:0.255px;">12ms</span>
<span class="t s" style="top:61px;font-size:14px;color:#1b1b1b;left:885.5px;letter-spacing:0.477px;">335 B</span>
<span class="t s" style="top:61px;font-size:14px;color:#1b1b1b;left:931px;text-decoration:underline;text-underline-offset:1.5px;text-decoration-thickness:1px;letter-spacing:0.503px;">200 OK</span>
<div class="b" style="left:987px;top:68px;width:6px;height:6px;background:#069061;border-radius:50%"></div>
<div class="b" style="left:834px;top:92px;width:551px;height:1px;background:#dfdfdf"></div>
<div class="b" style="left:834px;top:93px;width:551px;height:32px;background:#f6f6f6"></div>
<div class="b" style="left:834px;top:125px;width:551px;height:1px;background:#dfdfdf"></div>
<svg class="b" style="left:847.15px;top:103.9px;" width="6.3" height="10.2" viewBox="0 0 6.3 10.2"><path d="M1 1 L5.3 5.1 L1 9.2" fill="none" stroke="#787878" stroke-width="1.3" stroke-linecap="round" stroke-linejoin="round"/></svg>
<span class="t s" style="top:98.7px;font-size:14.5px;color:#1b1b1b;-webkit-text-stroke:0.2px #1b1b1b;left:868.3px;letter-spacing:0.202px;">Cookies</span>
<div class="b" style="left:834px;top:125px;width:551px;height:1px;background:#dfdfdf"></div>
<div class="b" style="left:834px;top:126px;width:551px;height:32px;background:#f6f6f6"></div>
<div class="b" style="left:834px;top:158px;width:551px;height:1px;background:#dfdfdf"></div>
<svg class="b" style="left:847.15px;top:136.9px;" width="6.3" height="10.2" viewBox="0 0 6.3 10.2"><path d="M1 1 L5.3 5.1 L1 9.2" fill="none" stroke="#787878" stroke-width="1.3" stroke-linecap="round" stroke-linejoin="round"/></svg>
<span class="t s" style="top:131.7px;font-size:14.5px;color:#1b1b1b;-webkit-text-stroke:0.2px #1b1b1b;left:868.3px;letter-spacing:0.125px;">Request Headers</span>
<div class="b" style="left:834px;top:158px;width:551px;height:1px;background:#dfdfdf"></div>
<div class="b" style="left:834px;top:159px;width:551px;height:32px;background:#f6f6f6"></div>
<div class="b" style="left:834px;top:191px;width:551px;height:1px;background:#dfdfdf"></div>
<svg class="b" style="left:847.15px;top:169.9px;" width="6.3" height="10.2" viewBox="0 0 6.3 10.2"><path d="M1 1 L5.3 5.1 L1 9.2" fill="none" stroke="#787878" stroke-width="1.3" stroke-linecap="round" stroke-linejoin="round"/></svg>
<span class="t s" style="top:164.7px;font-size:14.5px;color:#1b1b1b;-webkit-text-stroke:0.2px #1b1b1b;left:868.3px;letter-spacing:0.084px;">Response Headers</span>
<div class="b" style="left:834px;top:191px;width:551px;height:1px;background:#dfdfdf"></div>
<div class="b" style="left:834px;top:192px;width:551px;height:32px;background:#f6f6f6"></div>
<div class="b" style="left:834px;top:224px;width:551px;height:1px;background:#dfdfdf"></div>
<svg class="b" style="left:845.2px;top:205.35px;" width="10.2" height="6.3" viewBox="0 0 10.2 6.3"><path d="M1 1 L5.1 5.3 L9.2 1" fill="none" stroke="#787878" stroke-width="1.3" stroke-linecap="round" stroke-linejoin="round"/></svg>
<span class="t s" style="top:197.7px;font-size:14.5px;color:#1b1b1b;-webkit-text-stroke:0.2px #1b1b1b;left:868.3px;letter-spacing:0.312px;">Body</span>
<div class="b" style="left:989.25px;top:132.25px;width:19.5px;height:19.5px;border:1px solid #dcdcdc;border-radius:50%;box-sizing:border-box;background:#f6f6f6"></div>
<span class="t s" style="top:132.2px;font-size:12.5px;color:#757575;left:995.5px;">1</span>
<div class="b" style="left:1000.25px;top:165.25px;width:19.5px;height:19.5px;border:1px solid #dcdcdc;border-radius:50%;box-sizing:border-box;background:#f6f6f6"></div>
<span class="t s" style="top:165.2px;font-size:12.5px;color:#757575;left:1006.5px;">3</span>
<svg class="b" style="left:1305px;top:203.3px;" width="13" height="10" viewBox="0 0 13 10"><path d="M6.1 0.7 V6 M4 4.1 L6.1 6.2 L8.2 4.1 M0.7 6.9 Q0.8 9 3.2 9 H9 Q11.4 9 11.5 6.9" fill="none" stroke="#8e8e8e" stroke-width="1.05" stroke-linecap="round" stroke-linejoin="round"/></svg>
<span class="t s" style="top:197.7px;font-size:12.5px;color:#8e8e8e;left:1322px;letter-spacing:-0.013px;">Download</span>
<span class="t m" style="top:232px;font-size:12px;color:#757575;left:846px;">application/json</span>
<div class="b" style="left:834px;top:257px;width:551px;height:1px;background:#dfdfdf"></div>
<span class="t m" style="top:265.3px;font-size:14px;color:#858585;right:528.5px;">1</span>
<svg class="b" style="left:867.0px;top:273.0px;" width="10" height="6" viewBox="0 0 10 6"><path d="M1 1 L5.0 5 L9 1" fill="none" stroke="#8a8a8a" stroke-width="1.3" stroke-linecap="round" stroke-linejoin="round"/></svg>
<span class="t m" style="top:265.3px;font-size:14px;color:#1b1b1b;left:889.5px;"><span style="color:#8e8e8e">{</span></span>
<span class="t m" style="top:287.3px;font-size:14px;color:#858585;right:528.5px;">2</span>
<span class="t m" style="top:287.3px;font-size:14px;color:#1b1b1b;left:889.5px;">  <span style="color:#1b1b1b">&quot;code&quot;: </span><span style="color:#ff5800">0</span><span style="color:#1b1b1b">,</span></span>
<span class="t m" style="top:309.3px;font-size:14px;color:#858585;right:528.5px;">3</span>
<svg class="b" style="left:867.0px;top:317.0px;" width="10" height="6" viewBox="0 0 10 6"><path d="M1 1 L5.0 5 L9 1" fill="none" stroke="#8a8a8a" stroke-width="1.3" stroke-linecap="round" stroke-linejoin="round"/></svg>
<span class="t m" style="top:309.3px;font-size:14px;color:#1b1b1b;left:889.5px;">  <span style="color:#1b1b1b">&quot;data&quot;: </span><span style="color:#8e8e8e">{</span></span>
<span class="t m" style="top:331.3px;font-size:14px;color:#858585;right:528.5px;">4</span>
<svg class="b" style="left:867.0px;top:339.0px;" width="10" height="6" viewBox="0 0 10 6"><path d="M1 1 L5.0 5 L9 1" fill="none" stroke="#8a8a8a" stroke-width="1.3" stroke-linecap="round" stroke-linejoin="round"/></svg>
<span class="t m" style="top:331.3px;font-size:14px;color:#1b1b1b;left:889.5px;">    <span style="color:#1b1b1b">&quot;list&quot;: </span><span style="color:#8e8e8e">[</span></span>
<span class="t m" style="top:353.3px;font-size:14px;color:#858585;right:528.5px;">5</span>
<svg class="b" style="left:867.0px;top:361.0px;" width="10" height="6" viewBox="0 0 10 6"><path d="M1 1 L5.0 5 L9 1" fill="none" stroke="#8a8a8a" stroke-width="1.3" stroke-linecap="round" stroke-linejoin="round"/></svg>
<span class="t m" style="top:353.3px;font-size:14px;color:#1b1b1b;left:889.5px;">      <span style="color:#8e8e8e">{</span></span>
<span class="t m" style="top:375.3px;font-size:14px;color:#858585;right:528.5px;">6</span>
<span class="t m" style="top:375.3px;font-size:14px;color:#1b1b1b;left:889.5px;">        <span style="color:#1b1b1b">&quot;ID&quot;: </span><span style="color:#ff5800">1</span><span style="color:#1b1b1b">,</span></span>
<span class="t m" style="top:397.3px;font-size:14px;color:#858585;right:528.5px;">7</span>
<span class="t m" style="top:397.3px;font-size:14px;color:#1b1b1b;left:889.5px;">        <span style="color:#1b1b1b">&quot;CreatedAt&quot;: </span><span style="color:#0082d0">&quot;2025-11-25T09:31:24.7370014+08:00&quot;</span><span style="color:#1b1b1b">,</span></span>
<span class="t m" style="top:419.3px;font-size:14px;color:#858585;right:528.5px;">8</span>
<span class="t m" style="top:419.3px;font-size:14px;color:#1b1b1b;left:889.5px;">        <span style="color:#1b1b1b">&quot;UpdatedAt&quot;: </span><span style="color:#0082d0">&quot;2025-11-25T09:31:24.742605+08:00&quot;</span><span style="color:#1b1b1b">,</span></span>
<span class="t m" style="top:441.3px;font-size:14px;color:#858585;right:528.5px;">9</span>
<span class="t m" style="top:441.3px;font-size:14px;color:#1b1b1b;left:889.5px;">        <span style="color:#1b1b1b">&quot;name&quot;: </span><span style="color:#0082d0">&quot;默认项目&quot;</span><span style="color:#1b1b1b">,</span></span>
<span class="t m" style="top:463.3px;font-size:14px;color:#858585;right:528.5px;">10</span>
<span class="t m" style="top:463.3px;font-size:14px;color:#1b1b1b;left:889.5px;">        <span style="color:#1b1b1b">&quot;info&quot;: </span><span style="color:#0082d0">&quot;默认项目&quot;</span><span style="color:#1b1b1b">,</span></span>
<span class="t m" style="top:485.3px;font-size:14px;color:#858585;right:528.5px;">11</span>
<span class="t m" style="top:485.3px;font-size:14px;color:#1b1b1b;left:889.5px;">        <span style="color:#1b1b1b">&quot;stae&quot;: </span><span style="color:#8e8e8e">true</span><span style="color:#1b1b1b">,</span></span>
<span class="t m" style="top:507.3px;font-size:14px;color:#858585;right:528.5px;">12</span>
<span class="t m" style="top:507.3px;font-size:14px;color:#1b1b1b;left:889.5px;">        <span style="color:#1b1b1b">&quot;maxRAM&quot;: </span><span style="color:#ff5800">0</span><span style="color:#1b1b1b">,</span></span>
<span class="t m" style="top:529.3px;font-size:14px;color:#858585;right:528.5px;">13</span>
<span class="t m" style="top:529.3px;font-size:14px;color:#1b1b1b;left:889.5px;">        <span style="color:#1b1b1b">&quot;maxCPU&quot;: </span><span style="color:#ff5800">0</span><span style="color:#1b1b1b">,</span></span>
<span class="t m" style="top:551.3px;font-size:14px;color:#858585;right:528.5px;">14</span>
<span class="t m" style="top:551.3px;font-size:14px;color:#1b1b1b;left:889.5px;">        <span style="color:#1b1b1b">&quot;maxGPU&quot;: </span><span style="color:#ff5800">0</span><span style="color:#1b1b1b">,</span></span>
<span class="t m" style="top:573.3px;font-size:14px;color:#858585;right:528.5px;">15</span>
<span class="t m" style="top:573.3px;font-size:14px;color:#1b1b1b;left:889.5px;">        <span style="color:#1b1b1b">&quot;authorities&quot;: </span><span style="color:#069061">null</span><span style="color:#1b1b1b">,</span></span>
<span class="t m" style="top:595.3px;font-size:14px;color:#858585;right:528.5px;">16</span>
<span class="t m" style="top:595.3px;font-size:14px;color:#1b1b1b;left:889.5px;">        <span style="color:#1b1b1b">&quot;CreatedBy&quot;: </span><span style="color:#ff5800">0</span><span style="color:#1b1b1b">,</span></span>
<span class="t m" style="top:617.3px;font-size:14px;color:#858585;right:528.5px;">17</span>
<span class="t m" style="top:617.3px;font-size:14px;color:#1b1b1b;left:889.5px;">        <span style="color:#1b1b1b">&quot;UpdatedBy&quot;: </span><span style="color:#ff5800">0</span><span style="color:#1b1b1b">,</span></span>
<span class="t m" style="top:639.3px;font-size:14px;color:#858585;right:528.5px;">18</span>
<span class="t m" style="top:639.3px;font-size:14px;color:#1b1b1b;left:889.5px;">        <span style="color:#1b1b1b">&quot;DeletedBy&quot;: </span><span style="color:#ff5800">0</span></span>
<span class="t m" style="top:661.3px;font-size:14px;color:#858585;right:528.5px;">19</span>
<span class="t m" style="top:661.3px;font-size:14px;color:#1b1b1b;left:889.5px;">      <span style="color:#8e8e8e">}</span></span>
<span class="t m" style="top:683.3px;font-size:14px;color:#858585;right:528.5px;">20</span>
<span class="t m" style="top:683.3px;font-size:14px;color:#1b1b1b;left:889.5px;">    <span style="color:#8e8e8e">]</span><span style="color:#1b1b1b">,</span></span>
<span class="t m" style="top:705.3px;font-size:14px;color:#858585;right:528.5px;">21</span>
<span class="t m" style="top:705.3px;font-size:14px;color:#1b1b1b;left:889.5px;">    <span style="color:#1b1b1b">&quot;total&quot;: </span><span style="color:#ff5800">1</span><span style="color:#1b1b1b">,</span></span>
<span class="t m" style="top:727.3px;font-size:14px;color:#858585;right:528.5px;">22</span>
<span class="t m" style="top:727.3px;font-size:14px;color:#1b1b1b;left:889.5px;">    <span style="color:#1b1b1b">&quot;page&quot;: </span><span style="color:#ff5800">0</span><span style="color:#1b1b1b">,</span></span>
<span class="t m" style="top:749.3px;font-size:14px;color:#858585;right:528.5px;">23</span>
<span class="t m" style="top:749.3px;font-size:14px;color:#1b1b1b;left:889.5px;">    <span style="color:#1b1b1b">&quot;pageSize&quot;: </span><span style="color:#ff5800">0</span></span>
<span class="t m" style="top:771.3px;font-size:14px;color:#858585;right:528.5px;">24</span>
<span class="t m" style="top:771.3px;font-size:14px;color:#1b1b1b;left:889.5px;">  <span style="color:#8e8e8e">}</span><span style="color:#1b1b1b">,</span></span>
<span class="t m" style="top:793.3px;font-size:14px;color:#858585;right:528.5px;">25</span>
<span class="t m" style="top:793.3px;font-size:14px;color:#1b1b1b;left:889.5px;">  <span style="color:#1b1b1b">&quot;msg&quot;: </span><span style="color:#0082d0">&quot;获取成功&quot;</span></span>
<span class="t m" style="top:815.3px;font-size:14px;color:#858585;right:528.5px;">26</span>
<span class="t m" style="top:815.3px;font-size:14px;color:#1b1b1b;left:889.5px;"><span style="color:#8e8e8e">}</span></span>
<div class="b" style="left:280px;top:49px;width:553px;height:1136px;overflow:hidden"><div class="b" style="left:383px;top:64px;width:160px;height:793px;background:#fff;border-radius:3px;box-shadow:0 0 0 0.5px rgba(0,0,0,0.07),0 6px 18px rgba(0,0,0,0.17);"></div></div>
<svg class="b" style="left:674px;top:124px;" width="15" height="15" viewBox="0 0 15 15"><circle cx="6" cy="6" r="5" fill="none" stroke="#8e8e8e" stroke-width="1.1"/><path d="M9.7 9.7 L13 13" stroke="#8e8e8e" stroke-width="1.1" stroke-linecap="round"/></svg>
<div class="b" style="left:663px;top:149px;width:160px;height:1px;background:#e4e4e4"></div>
<div class="b" style="left:0;top:150px;width:1385px;height:756px;overflow:hidden"><div class="b" style="left:0;top:-150px;width:1385px;height:1185px">
<div class="b" style="left:674px;top:146px;width:16px;height:16px;border:1px solid #dcdcdc;border-radius:50%;box-sizing:border-box;background:#fff"></div>
<span class="t s" style="top:145.2px;font-size:13.5px;color:#1b1b1b;left:696.5px;letter-spacing:0.378px;">Http</span>
<span class="t s" style="top:177.2px;font-size:13.5px;color:#757575;left:676.5px;letter-spacing:-0.366px;">F#</span>
<div class="b" style="left:674px;top:210px;width:16px;height:16px;border:1px solid #dcdcdc;border-radius:50%;box-sizing:border-box;background:#fff"></div>
<span class="t s" style="top:209.2px;font-size:13.5px;color:#1b1b1b;left:696.5px;letter-spacing:0.280px;">HttpClient</span>
<span class="t s" style="top:241.2px;font-size:13.5px;color:#757575;left:676.5px;letter-spacing:-1.616px;">Go</span>
<div class="b" style="left:674px;top:274px;width:16px;height:16px;border:1px solid #dcdcdc;border-radius:50%;box-sizing:border-box;background:#fff"></div>
<span class="t s" style="top:273.2px;font-size:13.5px;color:#1b1b1b;left:696.5px;letter-spacing:0.011px;">NewRequest</span>
<span class="t s" style="top:305.2px;font-size:13.5px;color:#757575;left:676.5px;letter-spacing:-0.617px;">HTTP</span>
<div class="b" style="left:674px;top:338px;width:16px;height:16px;border:1px solid #dcdcdc;border-radius:50%;box-sizing:border-box;background:#fff"></div>
<span class="t s" style="top:337.2px;font-size:13.5px;color:#1b1b1b;left:696.5px;letter-spacing:-0.738px;">HTTP/1.1</span>
<span class="t s" style="top:369.2px;font-size:13.5px;color:#757575;left:676.5px;letter-spacing:-0.210px;">Java</span>
<div class="b" style="left:674px;top:402px;width:16px;height:16px;border:1px solid #dcdcdc;border-radius:50%;box-sizing:border-box;background:#fff"></div>
<span class="t s" style="top:401.2px;font-size:13.5px;color:#1b1b1b;left:696.5px;letter-spacing:0.296px;">AsyncHttp</span>
<div class="b" style="left:674px;top:434px;width:16px;height:16px;border:1px solid #dcdcdc;border-radius:50%;box-sizing:border-box;background:#fff"></div>
<span class="t s" style="top:433.2px;font-size:13.5px;color:#1b1b1b;left:696.5px;letter-spacing:0.203px;">java.net.http</span>
<div class="b" style="left:674px;top:466px;width:16px;height:16px;border:1px solid #dcdcdc;border-radius:50%;box-sizing:border-box;background:#fff"></div>
<span class="t s" style="top:465.2px;font-size:13.5px;color:#1b1b1b;left:696.5px;letter-spacing:0.257px;">OkHttp</span>
<div class="b" style="left:666px;top:490px;width:144px;height:32px;background:#f6f6f6;border-radius:4px"></div>
<div class="b" style="left:674px;top:498px;width:16px;height:16px;border:1px solid #dcdcdc;border-radius:50%;box-sizing:border-box;background:transparent"></div>
<span class="t s" style="top:497.2px;font-size:13.5px;color:#1b1b1b;left:696.5px;letter-spacing:0.089px;">Unirest</span>
<span class="t s" style="top:529.2px;font-size:13.5px;color:#757575;left:676.5px;letter-spacing:0.097px;">JavaScript</span>
<div class="b" style="left:674px;top:562px;width:16px;height:16px;border:1px solid #dcdcdc;border-radius:50%;box-sizing:border-box;background:#fff"></div>
<span class="t s" style="top:561.2px;font-size:13.5px;color:#1b1b1b;left:696.5px;letter-spacing:-0.141px;">Fetch</span>
<div class="b" style="left:674px;top:594px;width:16px;height:16px;border:1px solid #dcdcdc;border-radius:50%;box-sizing:border-box;background:#fff"></div>
<span class="t s" style="top:593.2px;font-size:13.5px;color:#1b1b1b;left:696.5px;letter-spacing:-0.129px;">Axios</span>
<div class="b" style="left:674px;top:626px;width:16px;height:16px;border:1px solid #dcdcdc;border-radius:50%;box-sizing:border-box;background:#fff"></div>
<span class="t s" style="top:625.2px;font-size:13.5px;color:#1b1b1b;left:696.5px;letter-spacing:0.404px;">ofetch</span>
<div class="b" style="left:674px;top:658px;width:16px;height:16px;border:1px solid #dcdcdc;border-radius:50%;box-sizing:border-box;background:#fff"></div>
<span class="t s" style="top:657.2px;font-size:13.5px;color:#1b1b1b;left:696.5px;letter-spacing:-0.013px;">jQuery</span>
<div class="b" style="left:674px;top:690px;width:16px;height:16px;border:1px solid #dcdcdc;border-radius:50%;box-sizing:border-box;background:#fff"></div>
<span class="t s" style="top:689.2px;font-size:13.5px;color:#1b1b1b;left:696.5px;letter-spacing:-1.358px;">XHR</span>
<span class="t s" style="top:721.2px;font-size:13.5px;color:#757575;left:676.5px;letter-spacing:0.004px;">Kotlin</span>
<div class="b" style="left:674px;top:754px;width:16px;height:16px;border:1px solid #dcdcdc;border-radius:50%;box-sizing:border-box;background:#fff"></div>
<span class="t s" style="top:753.2px;font-size:13.5px;color:#1b1b1b;left:696.5px;letter-spacing:0.257px;">OkHttp</span>
<span class="t s" style="top:785.2px;font-size:13.5px;color:#757575;left:676.5px;letter-spacing:0.053px;">Node.js</span>
<div class="b" style="left:674px;top:818px;width:16px;height:16px;border:1px solid #dcdcdc;border-radius:50%;box-sizing:border-box;background:#fff"></div>
<span class="t s" style="top:817.2px;font-size:13.5px;color:#1b1b1b;left:696.5px;letter-spacing:-0.141px;">Fetch</span>
<div class="b" style="left:674px;top:850px;width:16px;height:16px;background:#0099ff;border-radius:50%"></div>
<svg class="b" style="left:677px;top:854px;" width="10" height="8" viewBox="0 0 10 8"><path d="M1.6 4.8 L3.9 6.7 L8.6 1.6" fill="none" stroke="#fff" stroke-width="1.1" stroke-linecap="round" stroke-linejoin="round"/></svg>
<span class="t s" style="top:849.2px;font-size:13.5px;color:#1b1b1b;left:696.5px;letter-spacing:-0.129px;">Axios</span>
<div class="b" style="left:674px;top:882px;width:16px;height:16px;border:1px solid #dcdcdc;border-radius:50%;box-sizing:border-box;background:#fff"></div>
<span class="t s" style="top:881.2px;font-size:13.5px;color:#1b1b1b;left:696.5px;letter-spacing:0.404px;">ofetch</span>
</div></div>
<div class="b" style="left:815px;top:264px;width:6px;height:286px;background:#cfcfcf;border-radius:3px"></div>
<svg class="b" style="left:815px;top:154.6px;" width="6" height="5" viewBox="0 0 6 5"><path d="M3 0.5 L5.8 4.4 L0.2 4.4z" fill="#cfcfcf"/></svg>
<svg class="b" style="left:815px;top:898px;" width="6" height="5" viewBox="0 0 6 5"><path d="M3 4.5 L5.8 0.6 L0.2 0.6z" fill="#cfcfcf"/></svg>
</body></html>
